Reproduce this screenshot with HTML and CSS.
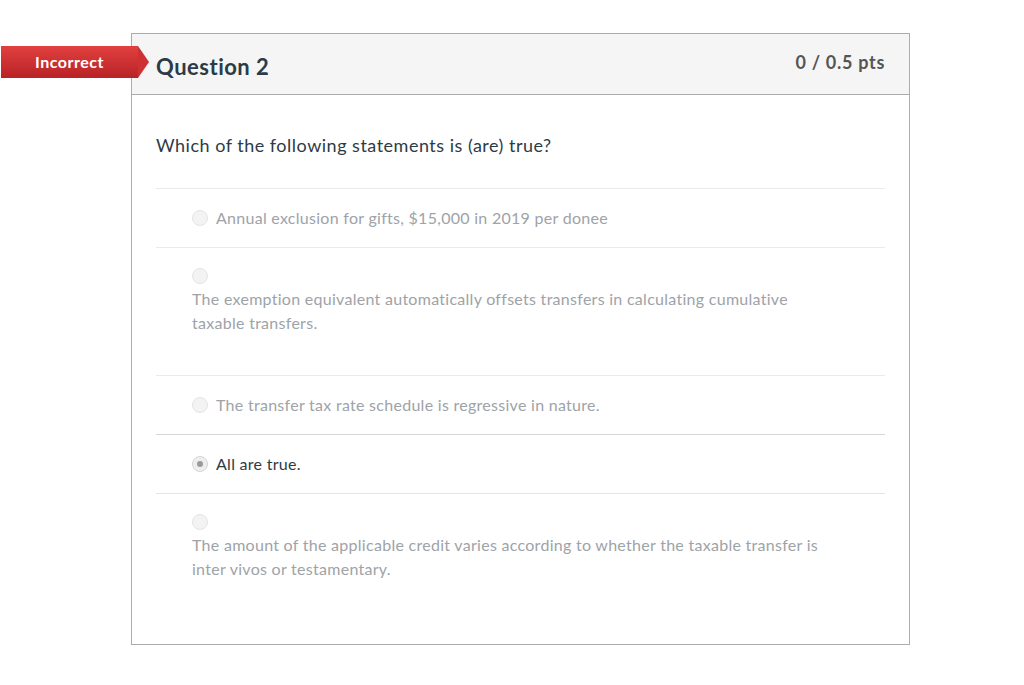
FILE: index.html
```html
<!DOCTYPE html>
<html>
<head>
<meta charset="utf-8">
<link rel="stylesheet" href="styles.css">
</head>
<body>
<div class="page">
  <div class="question">
    <div class="flag">Incorrect</div>
    <div class="q-header">
      <h2 class="q-title">Question 2</h2>
      <div class="q-pts">0 / 0.5 pts</div>
    </div>
    <div class="q-body">
      <p class="q-text">Which of the following statements is (are) true?</p>
      <div class="answers">
        <div class="answer">
          <span class="radio"></span>
          <span class="label">Annual exclusion for gifts, $15,000 in 2019 per donee</span>
        </div>
        <div class="answer stacked tall">
          <span class="radio"></span>
          <span class="label">The exemption equivalent automatically offsets transfers in calculating cumulative taxable transfers.</span>
        </div>
        <div class="answer">
          <span class="radio"></span>
          <span class="label">The transfer tax rate schedule is regressive in nature.</span>
        </div>
        <div class="answer selected">
          <span class="radio"></span>
          <span class="label">All are true.</span>
        </div>
        <div class="answer stacked last">
          <span class="radio"></span>
          <span class="label">The amount of the applicable credit varies according to whether the taxable transfer is inter vivos or testamentary.</span>
        </div>
      </div>
    </div>
  </div>
</div>
</body>
</html>
```
FILE: styles.css
```css
html, body {
  margin: 0;
  padding: 0;
  background: #fff;
}
body {
  font-family: Lato, "Open Sans", sans-serif;
  color: #2d3b45;
  font-variant-ligatures: none;
}
.page {
  padding: 33px 0 0 131px;
}
.question {
  position: relative;
  width: 777px;
  border: 1px solid #acacac;
  background: #fff;
}
.flag {
  position: absolute;
  left: -131px;
  top: 12px;
  width: 137px;
  height: 32px;
  line-height: 32px;
  text-align: center;
  color: #fff;
  font-weight: bold;
  font-size: 16px;
  letter-spacing: 0.5px;
  background: linear-gradient(#e2403f, #b82226);
  z-index: 2;
}
.flag::after {
  content: "";
  position: absolute;
  right: -11px;
  top: 0;
  width: 0;
  height: 0;
  border-top: 16px solid transparent;
  border-bottom: 16px solid transparent;
  border-left: 11px solid #cf3034;
}
.q-header {
  display: flex;
  justify-content: space-between;
  align-items: flex-start;
  height: 60px;
  padding: 0 24px;
  background: #f5f5f5;
  border-bottom: 1px solid #acacac;
}
.q-title {
  margin: 20px 0 0;
  font-size: 22px;
  font-weight: bold;
  line-height: 26px;
  letter-spacing: 0.5px;
  color: #2d3b45;
}
.q-pts {
  margin-top: 16px;
  font-size: 18px;
  font-weight: bold;
  line-height: 24px;
  letter-spacing: 0.7px;
  color: #555;
}
.q-body {
  padding: 38px 24px 63px;
}
.q-text {
  margin: 0 0 31px;
  font-size: 18px;
  line-height: 24px;
  letter-spacing: 0.5px;
  color: #2d3b45;
}
.answers {
  border-top: 1px solid #e8eaec;
}
.answer {
  display: flex;
  align-items: center;
  gap: 8px;
  padding: 17px 0 17px 36px;
  font-size: 16px;
  line-height: 24px;
  letter-spacing: 0.28px;
  color: #9ea3a8;
  border-bottom: 1px solid #e8eaec;
}
.answer.stacked {
  display: block;
  padding-top: 20px;
}
.answer.stacked .radio {
  display: block;
  margin-bottom: 3px;
}
.answer.stacked .label {
  display: block;
  max-width: 640px;
}
.answer.tall {
  padding-bottom: 40px;
}
.answer.last {
  border-bottom: none;
  padding-bottom: 0;
}
.answer.selected {
  color: #2d3b45;
  border-top: 1px solid #d5d8db;
  margin-top: -1px;
  border-bottom-color: #e3e5e7;
}
.radio {
  flex: none;
  width: 14px;
  height: 14px;
  border-radius: 50%;
  border: 1px solid #e4e4e4;
  background: #f3f3f3;
  position: relative;
}
.answer.selected .radio {
  border-color: #d6d6d6;
  background: #eee;
}
.answer.selected .radio::after {
  content: "";
  position: absolute;
  left: 4px;
  top: 4px;
  width: 6px;
  height: 6px;
  border-radius: 50%;
  background: #999;
}
```
